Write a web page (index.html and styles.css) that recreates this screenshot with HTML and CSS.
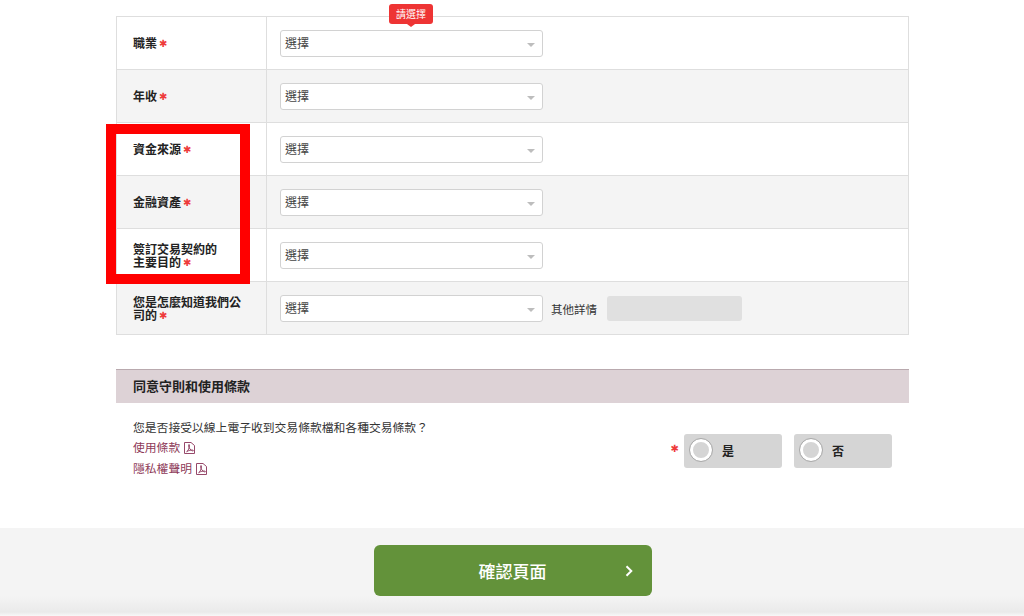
FILE: index.html
```html
<!DOCTYPE html>
<html lang="zh-Hant">
<head>
<meta charset="utf-8">
<title>確認頁面</title>
<link rel="stylesheet" href="styles.css">
</head>
<body>
<main class="main">
  <div class="table">
    <div class="row">
      <div class="label"><span>職業<span class="req">✱</span></span></div>
      <div class="cell">
        <div class="select has-tip">選擇<span class="tip">請選擇</span></div>
      </div>
    </div>
    <div class="row alt">
      <div class="label"><span>年收<span class="req">✱</span></span></div>
      <div class="cell"><div class="select">選擇</div></div>
    </div>
    <div class="row">
      <div class="label"><span>資金來源<span class="req">✱</span></span></div>
      <div class="cell"><div class="select">選擇</div></div>
    </div>
    <div class="row alt">
      <div class="label"><span>金融資產<span class="req">✱</span></span></div>
      <div class="cell"><div class="select">選擇</div></div>
    </div>
    <div class="row">
      <div class="label"><span>簽訂交易契約的<br>主要目的<span class="req">✱</span></span></div>
      <div class="cell"><div class="select">選擇</div></div>
    </div>
    <div class="row alt">
      <div class="label"><span>您是怎麼知道我們公司的<span class="req">✱</span></span></div>
      <div class="cell">
        <div class="select">選擇</div>
        <span class="other">其他詳情</span>
        <div class="other-input"></div>
      </div>
    </div>
  </div>

  <h2 class="section-head">同意守則和使用條款</h2>
  <section class="terms">
    <div class="terms-text">
      <p class="question">您是否接受以線上電子收到交易條款檔和各種交易條款？</p>
      <a class="doc" href="#">使用條款<svg class="pdf" viewBox="0 0 11 12" width="11" height="12"><path d="M.5.5h6.500l3.500 3v8h-10zM2.600 9.800c1.600-1 3-4 2.800-6.800-.1-.8-.8-.6-.8.200 0 2.600 2 5.300 4.200 5.800.8.100.8-.8 0-.9-1.900-.2-4 .4-5.700 1.200z" fill="none" stroke="#96486a" stroke-width="1"/></svg></a>
      <a class="doc" href="#">隱私權聲明<svg class="pdf" viewBox="0 0 11 12" width="11" height="12"><path d="M.5.5h6.500l3.500 3v8h-10zM2.600 9.800c1.600-1 3-4 2.800-6.800-.1-.8-.8-.6-.8.200 0 2.600 2 5.300 4.200 5.800.8.100.8-.8 0-.9-1.900-.2-4 .4-5.700 1.200z" fill="none" stroke="#96486a" stroke-width="1"/></svg></a>
    </div>
    <div class="choices">
      <span class="req choice-req">✱</span>
      <div class="choice"><span class="radio"></span>是</div>
      <div class="choice"><span class="radio"></span>否</div>
    </div>
  </section>
</main>
<footer class="footer">
  <a class="confirm" href="#">確認頁面<svg class="chev" viewBox="0 0 8 12" width="8" height="12"><path d="M1.500 1.200L6.300 6l-4.800 4.800" fill="none" stroke="#fff" stroke-width="2"/></svg></a>
</footer>
<div class="annotation"></div>
</body>
</html>
```
FILE: styles.css
```css
* { box-sizing: border-box; }
html, body { margin: 0; padding: 0; }
body {
  position: relative;
  width: 1024px;
  height: 616px;
  overflow: hidden;
  background: #fff;
  color: #222;
  font-family: "Noto Sans CJK TC", "Liberation Sans", sans-serif;
  font-size: 12px;
}
.main { margin-left: 116px; width: 793px; padding-top: 16px; }
.table { border: 1px solid #dedede; }
.row {
  display: grid;
  grid-template-columns: 150px 1fr;
  height: 53px;
  border-bottom: 1px solid #dedede;
}
.row:last-child { height: 52px; border-bottom: 0; }
.alt { background: #f4f4f4; }
.label {
  display: flex;
  align-items: center;
  padding: 0 16px;
  border-right: 1px solid #dedede;
  font-weight: 700;
  line-height: 13px;
  color: #222;
}
.req {
  margin-left: 2px;
  color: #ee3b3b;
  font-family: "DejaVu Sans", sans-serif;
  font-size: 10px;
  font-weight: 400;
  vertical-align: 1px;
}
.cell {
  display: flex;
  align-items: center;
  padding: 1px 0 0 13px;
}
.select {
  position: relative;
  width: 263px;
  height: 27px;
  padding-left: 4px;
  border: 1px solid #d2d2d2;
  border-radius: 3px;
  background: #fff;
  color: #444;
  line-height: 24px;
}
.select::after {
  content: "";
  position: absolute;
  right: 7px;
  top: 12px;
  border-left: 4px solid transparent;
  border-right: 4px solid transparent;
  border-top: 4px solid #bdbdbd;
}
.tip {
  position: absolute;
  left: 108px;
  top: -27px;
  width: 44px;
  height: 20px;
  border-radius: 3px;
  background: #ee3434;
  color: #fff;
  font-size: 10px;
  line-height: 20px;
  text-align: center;
}
.tip::after {
  content: "";
  position: absolute;
  left: 18px;
  top: 20px;
  border-left: 4px solid transparent;
  border-right: 4px solid transparent;
  border-top: 3px solid #ee3434;
}
.other { margin-left: 8px; color: #333; font-size: 11.5px; }
.other-input {
  width: 135px;
  height: 25px;
  margin-left: 10px;
  border-radius: 3px;
  background: #e0e0e0;
}
.section-head {
  margin: 34px 0 0;
  height: 34px;
  padding-left: 17px;
  border-top: 1px solid #b9a9ae;
  background: #ddd2d6;
  color: #222;
  font-size: 13px;
  font-weight: 700;
  line-height: 32px;
}
.terms {
  display: flex;
  justify-content: space-between;
  padding: 15px 17px 0;
  font-size: 11.8px;
}
.question { margin: 0; line-height: 18px; color: #333; }
.doc {
  display: block;
  height: 21px;
  line-height: 21px;
  color: #8e3a58;
  text-decoration: none;
}
.pdf { margin-left: 4px; vertical-align: -2px; }
.choices { display: flex; align-items: center; gap: 12px; height: 34px; margin-top: 16px; }
.choice-req { margin: 0 -7px 6px 0; }
.choice {
  display: flex;
  align-items: center;
  width: 98px;
  height: 34px;
  padding: 0 0 2px 5px;
  border-radius: 3px;
  background: #d5d5d5;
  color: #222;
  font-size: 12px;
  font-weight: 700;
}
.radio {
  width: 24px;
  height: 24px;
  margin-right: 9px;
  border: 1px solid #aaa;
  border-radius: 50%;
  background: #d5d5d5;
  box-shadow: inset 0 0 0 3px #fff;
}
.footer {
  position: absolute;
  left: 0;
  top: 528px;
  width: 100%;
  height: 88px;
  display: flex;
  justify-content: center;
  padding-top: 17px;
  padding-left: 1px;
  background: linear-gradient(#f4f4f4 0, #f4f4f4 68px, #eaeaea 84px, #f8f8f8 88px);
}
.confirm {
  position: relative;
  display: block;
  width: 278px;
  height: 51px;
  border-radius: 6px;
  background: #63923a;
  color: #fff;
  font-size: 17px;
  font-weight: 500;
  line-height: 51px;
  text-align: center;
  text-decoration: none;
}
.chev { position: absolute; left: 251px; top: 20px; }
.annotation {
  position: absolute;
  left: 106px;
  top: 124px;
  width: 144px;
  height: 160px;
  border: 10px solid #f00;
}
```
